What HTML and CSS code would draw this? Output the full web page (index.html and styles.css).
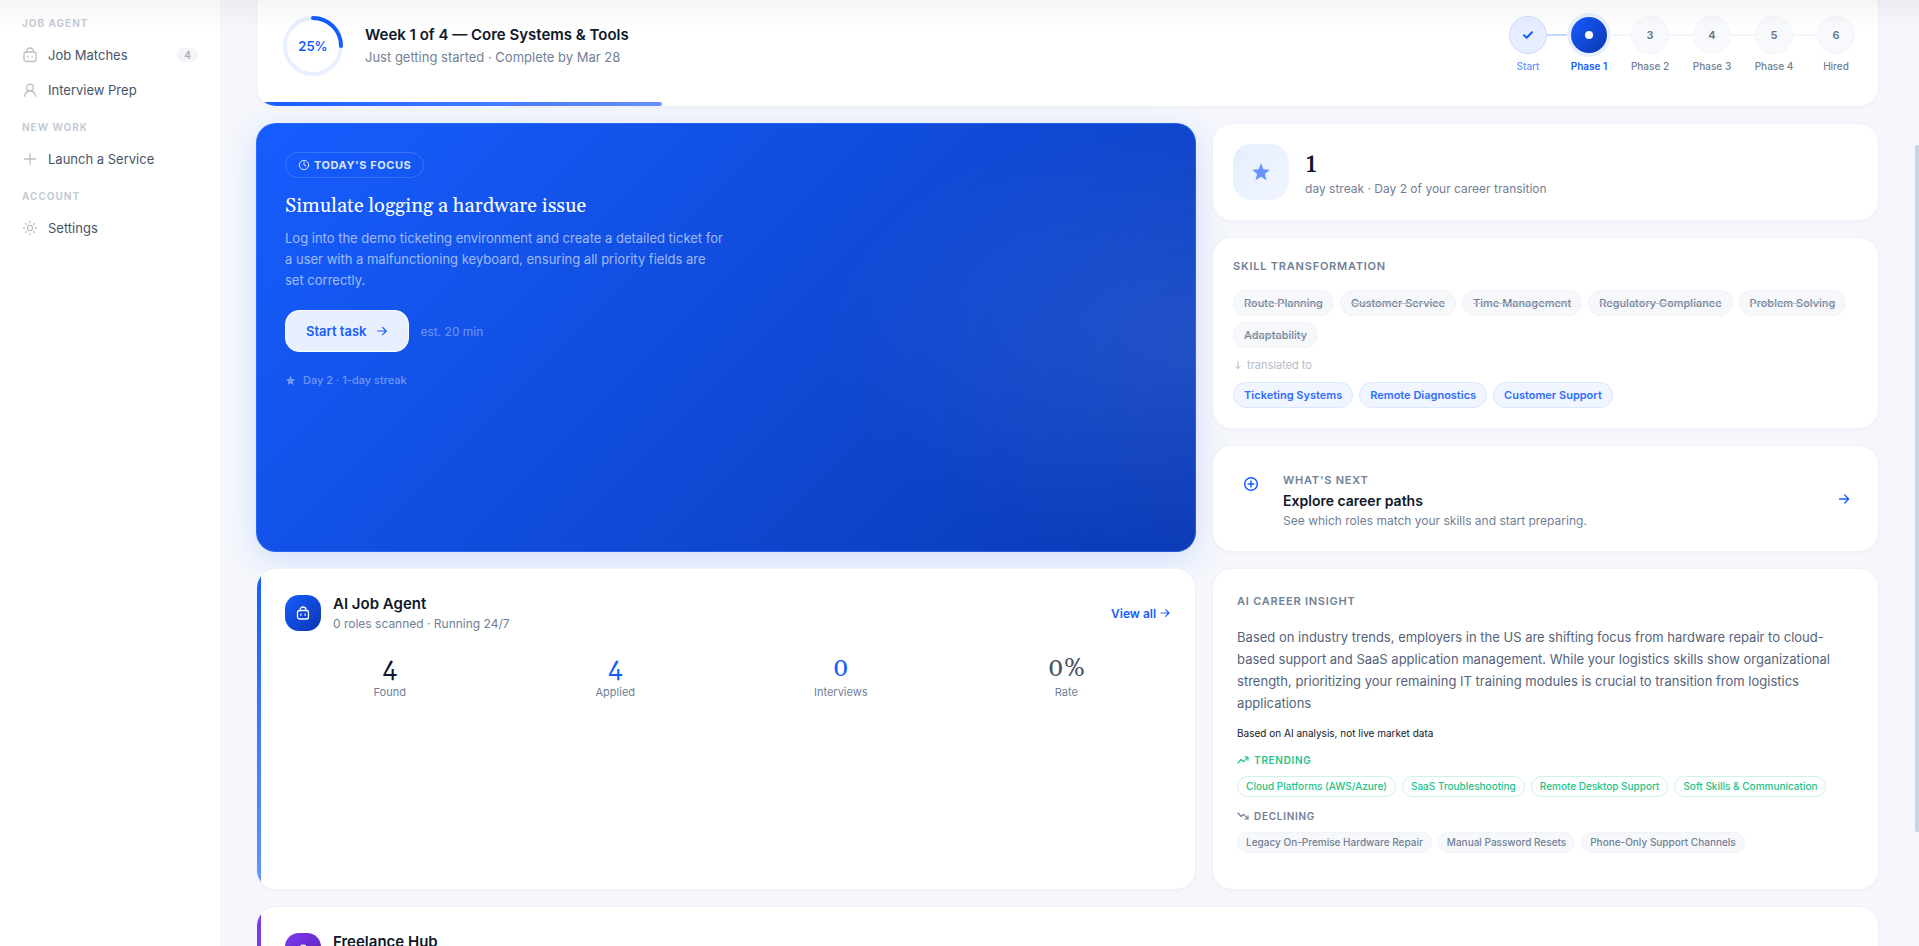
FILE: index.html
```
<!DOCTYPE html>
<html lang="en">

<head>
    <meta charset="UTF-8">
    <meta name="viewport" content="width=device-width, initial-scale=1.0">
    <title>Dashboard</title>
    <link rel="stylesheet" href="styles.css">
</head>

<body>
    <div class="app">
        <nav class="sidebar">
            <h2 class="nav-label">Job Agent</h2>
            <a class="nav-item" href="#">
                <svg class="nav-icon" viewBox="0 0 16 16"><rect x="2" y="5" width="12" height="9.500" rx="2"/><path d="M4.500 5v-.5a3.500 3.500 0 0 1 7 0V5M5.900 9.200v1M10.100 9.200v1"/></svg>
                Job Matches
                <span class="nav-badge">4</span>
            </a>
            <a class="nav-item" href="#">
                <svg class="nav-icon" viewBox="0 0 16 16"><circle cx="8" cy="5.500" r="3.300"/><path d="M2.600 14.200c.3-3 2.500-5.200 5.400-5.200s5.100 2.200 5.400 5.200"/></svg>
                Interview Prep
            </a>
            <h2 class="nav-label">New Work</h2>
            <a class="nav-item" href="#">
                <svg class="nav-icon" viewBox="0 0 16 16"><path d="M8 2.500v11M2.500 8h11"/></svg>
                Launch a Service
            </a>
            <h2 class="nav-label">Account</h2>
            <a class="nav-item" href="#">
                <svg class="nav-icon" viewBox="0 0 16 16"><circle cx="8" cy="8" r="2.600"/><path d="M8 1.500v1.200M8 13.300v1.200M1.500 8h1.200M13.300 8h1.200M3.400 3.400l.9.9M11.700 11.700l.9.9M3.400 12.600l.9-.9M11.700 4.300l.9-.9"/></svg>
                Settings
            </a>
        </nav>

        <main class="main">
            <section class="card journey">
                <div class="ring">
                    <svg viewBox="0 0 64 64">
                        <circle class="ring-track" cx="32" cy="32" r="28"/>
                        <path class="ring-value" d="M32 4a28 28 0 0 1 28 28"/>
                    </svg>
                    <span class="ring-text">25%</span>
                </div>
                <div class="journey-text">
                    <h1 class="journey-title">Week 1 of 4 — Core Systems &amp; Tools</h1>
                    <p class="journey-sub">Just getting started · Complete by Mar 28</p>
                </div>
                <ol class="steps">
                    <li class="step done">
                        <span class="dot"><svg viewBox="0 0 12 12"><path d="M2 6.300l2.700 2.500L10 3.200"/></svg></span>
                        <span class="step-name">Start</span>
                    </li>
                    <li class="line filled"></li>
                    <li class="step active">
                        <span class="dot"><i></i></span>
                        <span class="step-name">Phase 1</span>
                    </li>
                    <li class="line"></li>
                    <li class="step"><span class="dot">3</span><span class="step-name">Phase 2</span></li>
                    <li class="line"></li>
                    <li class="step"><span class="dot">4</span><span class="step-name">Phase 3</span></li>
                    <li class="line"></li>
                    <li class="step"><span class="dot">5</span><span class="step-name">Phase 4</span></li>
                    <li class="line"></li>
                    <li class="step"><span class="dot">6</span><span class="step-name">Hired</span></li>
                </ol>
                <div class="progress" style="width: 25%"></div>
            </section>

            <div class="grid">
                <section class="hero">
                    <span class="hero-badge">
                        <svg viewBox="0 0 12 12"><circle cx="6" cy="6" r="4.700"/><path d="M6 3v3l1.800 1"/></svg>
                        TODAY'S FOCUS
                    </span>
                    <h2 class="hero-title">Simulate logging a hardware issue</h2>
                    <p class="hero-text">Log into the demo ticketing environment and create a detailed ticket for a user with a malfunctioning keyboard, ensuring all priority fields are set correctly.</p>
                    <div class="hero-actions">
                        <button class="start" type="button">
                            Start task
                            <svg class="arrow" viewBox="0 0 14 14"><path d="M2 7h10M7.700 2.700L12 7l-4.300 4.300"/></svg>
                        </button>
                        <span class="estimate">est. 20 min</span>
                    </div>
                    <p class="hero-streak">
                        <svg viewBox="0 0 24 24"><path d="M12 1.500l2.900 7.300 7.600.6-5.800 5 1.900 7.600L12 17.800l-6.600 4.200 1.900-7.600-5.800-5 7.600-.6z"/></svg>
                        Day 2 · 1-day streak
                    </p>
                </section>

                <div class="side">
                    <section class="card streak">
                        <div class="streak-icon">
                            <svg viewBox="0 0 24 24"><path d="M12 1.500l2.900 7.300 7.600.6-5.800 5 1.900 7.600L12 17.800l-6.600 4.200 1.900-7.600-5.800-5 7.600-.6z"/></svg>
                        </div>
                        <div>
                            <div class="streak-num">1</div>
                            <p class="small">day streak · Day 2 of your career transition</p>
                        </div>
                    </section>

                    <section class="card skills">
                        <h3 class="eyebrow">Skill Transformation</h3>
                        <div class="chips">
                            <span class="chip old">Route Planning</span>
                            <span class="chip old">Customer Service</span>
                            <span class="chip old">Time Management</span>
                            <span class="chip old">Regulatory Compliance</span>
                            <span class="chip old">Problem Solving</span>
                            <span class="chip old">Adaptability</span>
                        </div>
                        <p class="translated">
                            <svg viewBox="0 0 10 10"><path d="M5 1.500v7M2.800 6.200L5 8.500l2.200-2.300"/></svg>
                            translated to
                        </p>
                        <div class="chips">
                            <span class="chip new">Ticketing Systems</span>
                            <span class="chip new">Remote Diagnostics</span>
                            <span class="chip new">Customer Support</span>
                        </div>
                    </section>

                    <a class="card next" href="#">
                        <span class="next-icon">
                            <svg viewBox="0 0 16 16"><circle cx="8" cy="8" r="6.300"/><path d="M8 5v6M5 8h6"/></svg>
                        </span>
                        <span class="next-text">
                            <span class="eyebrow">What's Next</span>
                            <strong class="next-title">Explore career paths</strong>
                            <span class="small">See which roles match your skills and start preparing.</span>
                        </span>
                        <span class="next-go"><svg class="arrow" viewBox="0 0 14 14"><path d="M2.500 7h9M7.700 3l4 4-4 4"/></svg></span>
                    </a>
                </div>

                <section class="card agent">
                    <header class="agent-head">
                        <div class="agent-icon">
                            <svg viewBox="0 0 16 16"><rect x="2.500" y="5.500" width="11" height="8.500" rx="2"/><path d="M5 5.500V5a3 3 0 0 1 6 0v.5M5.900 9.200v1M10.100 9.200v1"/></svg>
                        </div>
                        <div class="agent-name">
                            <h2 class="agent-title">AI Job Agent</h2>
                            <p class="small">0 roles scanned · Running 24/7</p>
                        </div>
                        <a class="view-all" href="#">View all <svg class="arrow" viewBox="0 0 14 14"><path d="M2.500 7h9M7.700 3l4 4-4 4"/></svg></a>
                    </header>
                    <div class="stats">
                        <div class="stat"><b>4</b><span>Found</span></div>
                        <div class="stat blue"><b>4</b><span>Applied</span></div>
                        <div class="stat blue"><b>0</b><span>Interviews</span></div>
                        <div class="stat grey"><b>0%</b><span>Rate</span></div>
                    </div>
                </section>

                <section class="card insight">
                    <h3 class="eyebrow">AI Career Insight</h3>
                    <p class="insight-text">Based on industry trends, employers in the US are shifting focus from hardware repair to cloud-based support and SaaS application management. While your logistics skills show organizational strength, prioritizing your remaining IT training modules is crucial to transition from logistics applications</p>
                    <p class="insight-note">Based on AI analysis, not live market data</p>
                    <h4 class="trend up">
                        <svg viewBox="0 0 12 12"><path d="M1 9l3.200-3.500 2.400 2.200L11 3.200M7.800 3H11v3.200"/></svg>
                        Trending
                    </h4>
                    <div class="tags">
                        <span class="tag green">Cloud Platforms (AWS/Azure)</span>
                        <span class="tag green">SaaS Troubleshooting</span>
                        <span class="tag green">Remote Desktop Support</span>
                        <span class="tag green">Soft Skills &amp; Communication</span>
                    </div>
                    <h4 class="trend">
                        <svg viewBox="0 0 12 12"><path d="M1 3l3.200 3.500 2.400-2.200L11 8.800M7.800 9H11V5.800"/></svg>
                        Declining
                    </h4>
                    <div class="tags">
                        <span class="tag">Legacy On-Premise Hardware Repair</span>
                        <span class="tag">Manual Password Resets</span>
                        <span class="tag">Phone-Only Support Channels</span>
                    </div>
                </section>

                <section class="card agent freelance">
                    <header class="agent-head">
                        <div class="agent-icon">
                            <svg viewBox="0 0 16 16"><circle cx="8" cy="5.500" r="3.300"/><path d="M2.600 14.200c.3-3 2.500-5.200 5.400-5.200s5.100 2.200 5.400 5.200"/></svg>
                        </div>
                        <h2 class="agent-title">Freelance Hub</h2>
                    </header>
                </section>
            </div>
        </main>
    </div>
    <div class="top-shade"></div>
    <div class="scroll-thumb"></div>
</body>

</html>
```
FILE: styles.css
```
* {
    box-sizing: border-box;
}

body {
    margin: 0;
    font-family: Inter, "Liberation Sans", sans-serif;
    font-size: 13px;
    color: #0f172a;
    background-color: #f5f7fc;
    overflow: hidden;
}

h1, h2, h3, h4, p, ol {
    margin: 0;
    padding: 0;
}

a {
    text-decoration: none;
    color: inherit;
}

svg {
    display: block;
    flex-shrink: 0;
    fill: none;
    stroke: currentColor;
    stroke-linecap: round;
    stroke-linejoin: round;
}

.app {
    display: flex;
    height: 100vh;
    overflow: hidden;
}

/* sidebar */

.sidebar {
    width: 220px;
    flex-shrink: 0;
    padding: 3px 12px;
    background-color: #fff;
}

.nav-label {
    padding: 13px 10px 7px;
    font-size: 10px;
    line-height: 14px;
    font-weight: 700;
    letter-spacing: 1px;
    text-transform: uppercase;
    color: #c5ccd8;
}

.nav-item {
    display: flex;
    align-items: center;
    gap: 10px;
    height: 35px;
    padding: 0 10px;
    color: #475569;
}

.nav-icon {
    width: 16px;
    height: 16px;
    stroke-width: 1.3;
    color: #b9bec8;
}

.nav-badge {
    margin-left: auto;
    padding: 0 7px;
    border-radius: 7px;
    font-size: 10px;
    line-height: 14px;
    font-weight: 600;
    color: #a3adbd;
    background-color: #f3f5fa;
}

/* main */

.main {
    flex: 1;
    min-width: 0;
    margin-top: -15px;
    padding: 0 40px 0 36px;
}

.card {
    background-color: #fff;
    border: 1px solid #f0f2f7;
    border-radius: 20px;
    box-shadow: 0 1px 3px rgba(15, 23, 42, 0.03);
}

.small {
    font-size: 12px;
    line-height: 18px;
    color: #718096;
}

.eyebrow {
    font-size: 11px;
    line-height: 16px;
    font-weight: 600;
    letter-spacing: 0.07em;
    text-transform: uppercase;
    color: #718096;
}

.arrow {
    width: 14px;
    height: 14px;
    stroke-width: 1.3;
}

/* journey card */

.journey {
    position: relative;
    display: flex;
    align-items: center;
    gap: 20px;
    margin-bottom: 16px;
    padding: 28px 23px 28px 24px;
    overflow: hidden;
}

.ring {
    position: relative;
    width: 64px;
    height: 64px;
}

.ring svg {
    stroke-width: 4;
}

.ring-track {
    stroke: #e8efff;
}

.ring-value {
    stroke: #165dff;
}

.ring-text {
    position: absolute;
    inset: 0;
    font-size: 13px;
    line-height: 64px;
    font-weight: 600;
    text-align: center;
    color: #165dff;
}

.journey-text {
    flex: 1;
}

.journey-title {
    font-size: 15px;
    line-height: 22px;
    font-weight: 600;
}

.journey-sub {
    font-size: 13px;
    line-height: 22px;
    color: #718096;
}

.steps {
    display: flex;
    align-self: flex-start;
    margin-top: 2px;
    list-style: none;
}

.step {
    display: flex;
    flex-direction: column;
    align-items: center;
    gap: 6px;
    width: 38px;
    white-space: nowrap;
}

.step.active {
    width: 36px;
}

.dot {
    display: flex;
    flex-shrink: 0;
    align-items: center;
    justify-content: center;
    width: 38px;
    height: 38px;
    border: 1px solid #f3f5fa;
    border-radius: 50%;
    font-size: 11px;
    font-weight: 600;
    color: #64748b;
    background-color: #f8f9fc;
}

.dot svg {
    width: 12px;
    height: 12px;
    stroke-width: 2;
    color: #165dff;
}

.step-name {
    font-size: 10px;
    line-height: 12px;
    font-weight: 500;
    color: #718096;
}

.done .dot {
    border-color: #c9d9ff;
    background-color: #e6eeff;
}

.done .step-name {
    color: #6b95ff;
}

.active .dot {
    width: 36px;
    height: 36px;
    margin: 1px 0;
    border: none;
    background: linear-gradient(135deg, #165dff, #0a36b0);
    box-shadow: 0 0 0 4px #e8efff;
}

.active .dot i {
    width: 8px;
    height: 8px;
    border-radius: 50%;
    background-color: #fff;
}

.active .step-name {
    font-weight: 600;
    color: #165dff;
}

.line {
    width: 24px;
    height: 2px;
    margin-top: 18px;
    background-color: #f3f5fa;
}

.line.filled {
    background-color: #c5d6ff;
}

.progress {
    position: absolute;
    left: 0;
    bottom: 0;
    height: 4px;
    border-radius: 0 2px 2px 0;
    background: linear-gradient(90deg, #165dff, #6690ff);
}

/* grid */

.grid {
    display: grid;
    grid-template-columns: repeat(12, 1fr);
    gap: 16px;
}

.hero {
    grid-column: span 7;
    padding: 29px;
    border-radius: 20px;
    color: #fff;
    background: radial-gradient(370px 220px at 100% 50%, rgba(255, 255, 255, 0.09), transparent), linear-gradient(135deg, #165dff, #0a3ab5);
    box-shadow: 0 8px 32px rgba(22, 93, 255, 0.16), inset 0 0 0 1px rgba(60, 120, 255, 0.5);
}

.hero-badge {
    display: inline-flex;
    align-items: center;
    gap: 4px;
    height: 26px;
    padding: 0 12px;
    border: 1px solid rgba(255, 255, 255, 0.15);
    border-radius: 13px;
    font-size: 11px;
    font-weight: 700;
    letter-spacing: 0.05em;
    color: rgba(255, 255, 255, 0.85);
}

.hero-badge svg {
    width: 12px;
    height: 12px;
}

.hero-title {
    margin-top: 14px;
    font-family: Georgia, Gelasio, "Liberation Serif", serif;
    font-size: 20px;
    line-height: 28px;
    font-weight: 400;
}

.hero-text {
    max-width: 440px;
    margin-top: 8px;
    line-height: 21px;
    color: rgba(255, 255, 255, 0.6);
}

.hero-actions {
    display: flex;
    align-items: center;
    gap: 12px;
    margin-top: 19px;
}

.start {
    display: flex;
    align-items: center;
    gap: 9px;
    height: 42px;
    padding: 0 20px;
    border: 1px solid #fff;
    border-radius: 14px;
    font: 600 13px Inter, "Liberation Sans", sans-serif;
    color: #165dff;
    background-color: #e8efff;
}

.start .arrow {
    width: 12px;
    height: 12px;
}

.estimate {
    font-size: 12px;
    color: rgba(255, 255, 255, 0.4);
}

.hero-streak {
    display: flex;
    align-items: center;
    gap: 7px;
    margin-top: 20px;
    font-size: 11px;
    line-height: 16px;
    font-weight: 500;
    color: rgba(255, 255, 255, 0.4);
}

.hero-streak svg {
    width: 11px;
    height: 11px;
    fill: currentColor;
    stroke: none;
}

/* right column */

.side {
    grid-column: span 5;
    display: flex;
    flex-direction: column;
    gap: 16px;
}

.streak {
    display: flex;
    align-items: center;
    gap: 16px;
    padding: 20px;
}

.streak-icon {
    display: flex;
    align-items: center;
    justify-content: center;
    width: 56px;
    height: 56px;
    border-radius: 18px;
    color: #6695ff;
    background: linear-gradient(135deg, #e6eeff, #f0f5ff);
}

.streak-icon svg {
    width: 20px;
    height: 20px;
    fill: currentColor;
    stroke: none;
}

.streak-num {
    padding-top: 2px;
    font-family: Georgia, Gelasio, "Liberation Serif", serif;
    font-size: 28px;
    line-height: 32px;
    font-weight: 500;
}

.skills {
    padding: 20px;
}

.chips {
    display: flex;
    flex-wrap: wrap;
    gap: 6px;
}

.skills .eyebrow {
    margin-bottom: 16px;
}

.chip {
    height: 26px;
    padding: 0 10px;
    border: 1px solid #f0f2f7;
    border-radius: 13px;
    font-size: 11px;
    line-height: 24px;
    font-weight: 500;
    color: #718096;
    background-color: #f6f8fc;
}

.chip.old {
    text-decoration: line-through;
    text-decoration-color: #b9c2cf;
}

.chip.new {
    font-weight: 600;
    border-color: #dbe6ff;
    color: #2f6eff;
    background-color: #f0f5ff;
}

.translated {
    display: flex;
    align-items: center;
    gap: 4px;
    margin: 8px 0;
    font-size: 11px;
    line-height: 18px;
    color: #b4bcc9;
}

.translated svg {
    width: 10px;
    height: 10px;
}

.next {
    display: flex;
    align-items: flex-start;
    gap: 14px;
    padding: 20px;
}

.next-icon {
    display: flex;
    align-items: center;
    justify-content: center;
    width: 36px;
    height: 36px;
    color: #165dff;
}

.next-icon svg {
    width: 16px;
    height: 16px;
    stroke-width: 1.5;
}

.next-text {
    flex: 1;
    display: flex;
    flex-direction: column;
    padding-top: 6px;
}

.next-title {
    margin-top: 3px;
    font-size: 14px;
    line-height: 20px;
    font-weight: 600;
}

.next-text .small {
    line-height: 20px;
}

.next-go {
    align-self: center;
    padding: 0 7px;
    color: #165dff;
}

/* agent */

.agent {
    position: relative;
    grid-column: span 7;
    padding: 24px 24px 24px 28px;
    overflow: hidden;
}

.agent::before {
    content: "";
    position: absolute;
    left: 0;
    top: 0;
    bottom: 0;
    width: 4px;
    background: linear-gradient(#165dff, #6695ff);
}

.agent-head {
    display: flex;
    align-items: center;
    gap: 12px;
}

.agent-icon {
    display: flex;
    align-items: center;
    justify-content: center;
    width: 36px;
    height: 36px;
    border-radius: 14px;
    color: #fff;
    background: linear-gradient(135deg, #165dff, #0a36b0);
}

.agent-icon svg {
    width: 16px;
    height: 16px;
    stroke-width: 1.3;
}

.agent-name {
    flex: 1;
}

.agent-title {
    font-size: 15px;
    line-height: 22px;
    font-weight: 600;
}

.view-all {
    display: flex;
    align-items: center;
    gap: 3px;
    font-size: 12px;
    font-weight: 600;
    color: #165dff;
}

.view-all .arrow {
    width: 12px;
    height: 12px;
}

.stats {
    display: grid;
    grid-template-columns: repeat(4, 1fr);
    gap: 16px;
    margin-top: 20px;
}

.stat {
    display: flex;
    flex-direction: column;
    align-items: center;
    color: #718096;
    font-size: 11px;
    line-height: 16px;
}

.stat b {
    font-family: Georgia, Gelasio, "Liberation Serif", serif;
    font-size: 26px;
    line-height: 31px;
    font-weight: 400;
    font-variant-numeric: oldstyle-nums;
    color: #0f172a;
}

.stat.blue b {
    color: #165dff;
}

.stat.grey b {
    color: #475569;
}

.freelance {
    grid-column: span 12;
}

.freelance .agent-head {
    align-items: flex-start;
}

.freelance::before {
    background: #7c3aed;
}

.freelance .agent-icon {
    margin-top: 2px;
    background: linear-gradient(135deg, #7c3aed, #5b21b6);
}

/* insight */

.insight {
    grid-column: span 5;
    padding: 24px 24px 36px;
}

.insight-text {
    margin-top: 17px;
    line-height: 22px;
    color: #56637a;
}

.insight-note {
    margin-top: 10px;
    font-size: 10px;
    line-height: 18px;
}

.trend {
    display: flex;
    align-items: center;
    gap: 5px;
    margin: 11px 0 8px;
    font-size: 10px;
    line-height: 16px;
    font-weight: 600;
    letter-spacing: 0.07em;
    text-transform: uppercase;
    color: #718096;
}

.insight-note + .trend {
    margin-top: 10px;
}

.trend.up {
    color: #1cc48a;
}

.trend svg {
    width: 12px;
    height: 12px;
    stroke-width: 1.2;
}

.tags {
    display: flex;
    flex-wrap: wrap;
    gap: 6px;
}

.tag {
    height: 21px;
    padding: 0 8px;
    border: 1px solid #f0f2f7;
    border-radius: 11px;
    font-size: 10px;
    line-height: 19px;
    font-weight: 500;
    color: #718096;
    background-color: #f6f8fc;
}

.tag.green {
    border-color: #cdf3e4;
    color: #1cc48a;
    background-color: #fff;
}

/* overlays */

.top-shade {
    position: fixed;
    top: 0;
    left: 0;
    right: 0;
    height: 30px;
    background: linear-gradient(rgba(0, 0, 0, 0.04), transparent);
    pointer-events: none;
}

.scroll-thumb {
    position: fixed;
    top: 145px;
    right: 0;
    width: 4px;
    height: 687px;
    border-radius: 2px 0 0 2px;
    background-color: #cbd5e1;
}
```
